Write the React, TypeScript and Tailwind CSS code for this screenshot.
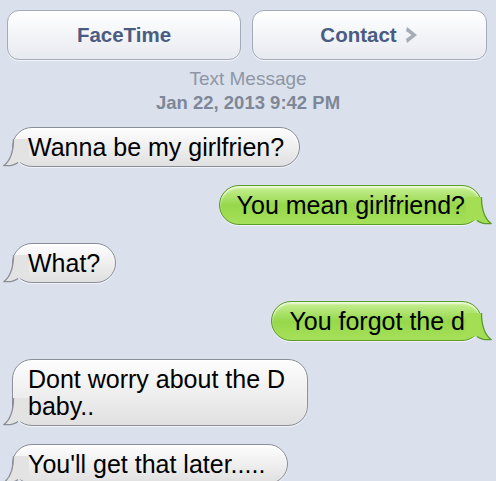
import type { ReactNode } from "react";

const font = { fontFamily: '"Liberation Sans", Arial, Helvetica, sans-serif' };

const GrayTail = () => (
  <svg
    className="absolute left-[-10px] bottom-[-1px]"
    width="26"
    height="28"
    viewBox="0 0 26 28"
  >
    <path
      d="M10.5 0 C10.5 13 8 21 1 26.5 C7 27.2 12 25.8 15 23.5 L26 23.5 L26 0 Z"
      fill="#e3e3e3"
    />
    <path
      d="M10.5 0 C10.5 13 8 21 1 26.5 C7 27.2 12 25.8 15 23.5"
      fill="none"
      stroke="#8a8f97"
      strokeWidth="1.3"
    />
  </svg>
);

const GreenTail = () => (
  <svg
    className="absolute right-[-11px] bottom-[-1px]"
    width="26"
    height="28"
    viewBox="0 0 26 28"
  >
    <path
      d="M15.5 0 C15.5 13 18 21 25 26.5 C19 27.2 14 25.8 11 23.5 L0 23.5 L0 0 Z"
      fill="#a3de55"
    />
    <path
      d="M15.5 0 C15.5 13 18 21 25 26.5 C19 27.2 14 25.8 11 23.5"
      fill="none"
      stroke="#5b9a2c"
      strokeWidth="1.3"
    />
  </svg>
);

const Bubble = ({
  me,
  wide,
  children,
}: {
  me?: boolean;
  wide?: boolean;
  children: ReactNode;
}) => (
  <div className={me ? "flex justify-end pr-[14px]" : "flex justify-start pl-[12px]"}>
    <div
      className={
        me
          ? "relative max-w-[320px] rounded-[20px] border border-[#5b9a2c] bg-gradient-to-b from-[#c9f094] via-[#96d84a] to-[#a6e05a] pl-[17px] pr-[16px] py-[5.5px] text-[25px] leading-[27px] text-black shadow-[inset_0_2px_2px_rgba(255,255,255,0.7),0_1px_0_rgba(255,255,255,0.6)]"
          : wide
            ? "relative max-w-[320px] rounded-[20px] border border-[#8a8f97] bg-gradient-to-b from-[#fdfdfd] via-[#efefef] to-[#e0e0e0] pl-[15px] pr-[22px] py-[5.5px] text-[25px] leading-[27px] text-black shadow-[inset_0_2px_2px_rgba(255,255,255,0.9),0_1px_0_rgba(255,255,255,0.6)]"
            : "relative max-w-[320px] rounded-[20px] border border-[#8a8f97] bg-gradient-to-b from-[#fdfdfd] via-[#efefef] to-[#e0e0e0] px-[15px] py-[5.5px] text-[25px] leading-[27px] text-black shadow-[inset_0_2px_2px_rgba(255,255,255,0.9),0_1px_0_rgba(255,255,255,0.6)]"
      }
    >
      {me ? <GreenTail /> : <GrayTail />}
      <span className="relative">{children}</span>
    </div>
  </div>
);

const Button = ({ children }: { children: ReactNode }) => (
  <button className="flex h-[50px] items-center justify-center gap-[8px] rounded-[12px] border border-[#a3abb9] bg-gradient-to-b from-[#ffffff] to-[#e7eaf0] text-[20.5px] font-bold text-[#4b5c82] shadow-[0_1px_0_rgba(255,255,255,0.7)]">
    {children}
  </button>
);

export default function App() {
  return (
    <div
      className="h-[481px] w-[496px] overflow-hidden bg-[#dbe1ec]"
      style={font}
    >
      <div className="grid grid-cols-[234px_235px] gap-[11px] pl-[7px] pt-[10px]">
        <Button>FaceTime</Button>
        <Button>
          Contact
          <svg width="14" height="18" viewBox="0 0 14 18">
            <path
              d="M2 1 L12 9 L2 17 L1 13 L6.5 9 L1 5 Z"
              fill="#a4acb8"
            />
          </svg>
        </Button>
      </div>
      <div className="mt-[7px] flex flex-col items-center leading-[24px]">
        <span className="text-[19px] text-[#8e96a5]">Text Message</span>
        <span className="text-[18.5px] font-bold text-[#7e8797]">Jan 22, 2013 9:42 PM</span>
      </div>
      <div className="mt-[12px] flex flex-col gap-[18px]">
        <Bubble>Wanna be my girlfrien?</Bubble>
        <Bubble me>You mean girlfriend?</Bubble>
        <Bubble>What?</Bubble>
        <Bubble me>You forgot the d</Bubble>
        <Bubble wide>
          Dont worry about the D
          <br />
          baby..
        </Bubble>
        <Bubble wide>You'll get that later.....</Bubble>
      </div>
    </div>
  );
}
